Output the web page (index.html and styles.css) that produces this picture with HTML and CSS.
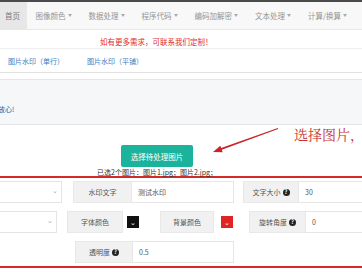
FILE: index.html
```html
<!DOCTYPE html>
<html lang="zh">
<head>
<meta charset="utf-8">
<link rel="stylesheet" href="styles.css">
</head>
<body>
<div class="topbar"></div>
<nav class="nav">
  <a class="active">首页</a>
  <a>图像颜色 <i class="caret"></i></a>
  <a>数据处理 <i class="caret"></i></a>
  <a>程序代码 <i class="caret"></i></a>
  <a>编码加解密 <i class="caret"></i></a>
  <a>文本处理 <i class="caret"></i></a>
  <a>计算/换算 <i class="caret"></i></a>
</nav>
<div class="notice">如有更多需求，可联系我们定制！</div>
<div class="tabs">
  <a>图片水印（单行）</a>
  <a>图片水印（平铺）</a>
</div>
<div class="well"><span class="well-text">请放心!</span></div>
<button class="pick">选择待处理图片</button>
<div class="files">已选2个图片：图片1.jpg；图片2.jpg；</div>
<div class="form">
  <div class="row">
    <div class="select s1"><span class="chev">⌄</span></div>
    <div class="addon a1">水印文字</div>
    <div class="input i1">测试水印</div>
    <div class="addon a2">文字大小 <span class="help">?</span></div>
    <div class="input i2">30</div>
  </div>
  <div class="row">
    <div class="select s2"><span class="chev">⌄</span></div>
    <div class="addon a3">字体颜色</div>
    <div class="swatchbox"><span class="swatch black">⌄</span></div>
    <div class="addon a4">背景颜色</div>
    <div class="swatchbox sb2"><span class="swatch red">⌄</span></div>
    <div class="addon a5">旋转角度 <span class="help">?</span></div>
    <div class="input i3">0</div>
  </div>
  <div class="row">
    <div class="addon a6">透明度 <span class="help">?</span></div>
    <div class="input i4">0.5</div>
  </div>
</div>
<svg class="arrow" width="80" height="40" viewBox="0 0 80 40">
  <polygon points="8,32 17.67,32.23 16.82,29.87 73.17,8.97 72.83,8.03 16.14,27.99 15.29,25.63" fill="#c8262a"/>
</svg>
<div class="note">选择图片，</div>
</body>
</html>
```
FILE: styles.css
```css
html, body {
  margin: 0;
  padding: 0;
}
body {
  width: 362px;
  height: 272px;
  overflow: hidden;
  position: relative;
  background: #fff;
  font-family: "Noto Sans CJK SC", "Liberation Sans", sans-serif;
  font-size: 7px;
  color: #555;
}
.topbar {
  height: 2px;
  background: #4b4b4b;
}
.nav {
  height: 27px;
  background: #f8f8f8;
  border-bottom: 1px solid #e7e7e7;
  display: flex;
}
.nav a {
  display: flex;
  align-items: center;
  padding: 0 8.5px;
  color: #959595;
  font-size: 7.5px;
  white-space: nowrap;
}
.nav a.active {
  background: #e7e7e7;
  color: #777;
  padding: 0 7px 0 5px;
}
.caret {
  display: inline-block;
  width: 0;
  height: 0;
  margin-left: 2px;
  border-top: 3px solid #aaa;
  border-left: 2.5px solid transparent;
  border-right: 2.5px solid transparent;
}
.notice {
  height: 19px;
  box-sizing: border-box;
  padding: 7px 0 0 100px;
  line-height: 10px;
  font-size: 7.5px;
  color: #e42a2a;
  border-bottom: 1px solid #eee;
}
.tabs {
  height: 23px;
  border-bottom: 1px solid #e2e2e2;
  display: flex;
  align-items: center;
  padding-left: 8px;
  gap: 23px;
  color: #3c7cc4;
}
.well {
  margin-top: 6px;
  height: 44px;
  background: #f6f7f8;
  border: 1px solid #e6e6e6;
  border-left: none;
  border-right: none;
  position: relative;
}
.well-text {
  display: block;
  margin: 24px 0 0 -9px;
  line-height: 10px;
  color: #35529a;
}
.pick {
  display: block;
  margin: 20px 0 0 121px;
  width: 72px;
  height: 22px;
  border: none;
  border-radius: 2px;
  background: #1cb39c;
  color: #fff;
  font-family: inherit;
  font-size: 7.5px;
  padding: 0;
}
.files {
  margin-top: 1px;
  height: 8px;
  line-height: 8px;
  padding-left: 97px;
  color: #333;
  white-space: nowrap;
}
.form {
  border-top: 2px solid #d42a2a;
  border-bottom: 2px solid #d42a2a;
  padding: 3px 0 3px;
}
.row {
  display: flex;
  height: 22px;
  align-items: stretch;
}
.row + .row {
  margin-top: 8px;
}
.select, .input, .addon, .swatchbox {
  box-sizing: border-box;
  flex: none;
  display: flex;
  align-items: center;
}
.select {
  background: #fff;
  border: 1px solid #e4e4e4;
  border-left: none;
  justify-content: flex-end;
  padding-right: 3px;
}
.chev {
  color: #aaa;
  font-size: 7px;
  line-height: 7px;
  margin-top: -3px;
}
.s1 { width: 62px; }
.s2 { width: 57px; }
.addon {
  background: #f1f1f1;
  border: 1px solid #e8e8e8;
  justify-content: center;
  color: #555;
  white-space: nowrap;
}
.input {
  background: #fff;
  border: 1px solid #e6e6e6;
  border-left: none;
  padding-left: 6px;
  color: #555;
}
.a1 { margin-left: 11px; width: 59px; }
.i1 { width: 102px; }
.a2 { margin-left: 9px; width: 56px; }
.i2 { width: 80px; }
.a3 { margin-left: 10px; width: 56px; }
.swatchbox {
  width: 37px;
  padding-left: 4px;
}
.sb2 { width: 35px; padding-left: 7px; }
.swatch {
  width: 12px;
  height: 12px;
  display: flex;
  align-items: center;
  justify-content: center;
  color: #fff;
  font-size: 7px;
  line-height: 7px;
}
.swatch.black { background: #111; }
.swatch.red { background: #e02424; }
.a4 { width: 54px; }
.a5 { width: 57px; }
.i3 { width: 70px; }
.a6 { margin-left: 75px; width: 58px; }
.i4 { width: 101px; }
.help {
  display: inline-flex;
  align-items: center;
  justify-content: center;
  width: 7px;
  height: 7px;
  margin-left: 2px;
  border-radius: 50%;
  background: #222;
  color: #fff;
  font-size: 5.5px;
  font-weight: bold;
  line-height: 7px;
}
.arrow {
  position: absolute;
  left: 205px;
  top: 120px;
}
.note {
  position: absolute;
  left: 294px;
  top: 125px;
  font-family: "Noto Serif CJK SC", "Noto Sans CJK SC", serif;
  font-size: 14px;
  line-height: 18px;
  color: #c9302c;
  white-space: nowrap;
}
```
